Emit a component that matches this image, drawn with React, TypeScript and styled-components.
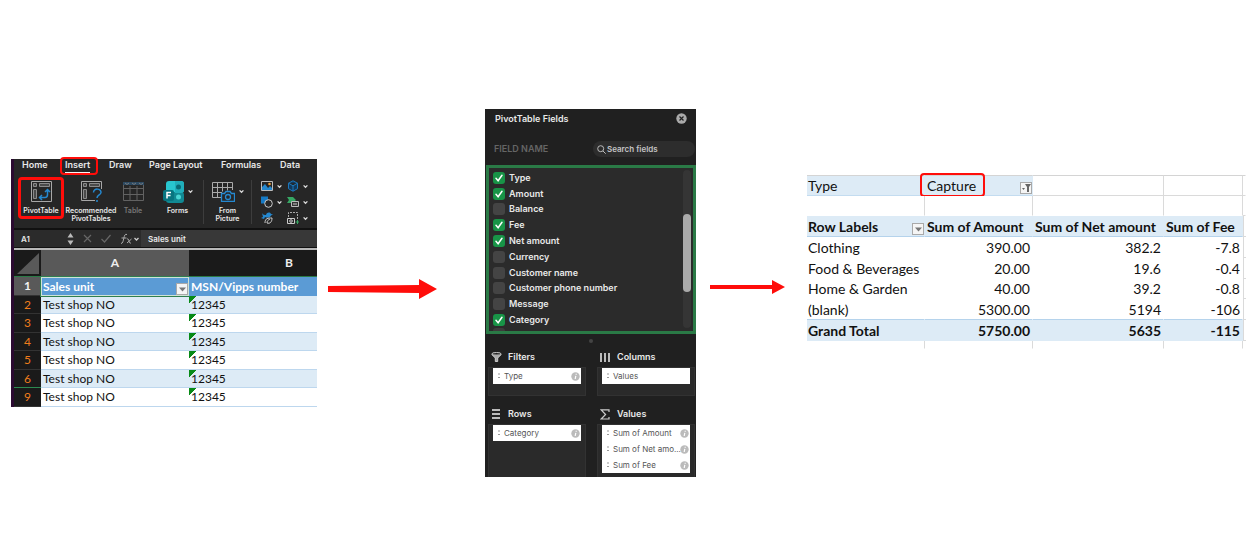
import React from "react";
import styled, { createGlobalStyle } from "styled-components";

const UI = `Inter, "Liberation Sans", sans-serif`;
const SHEET = `Lato, "Liberation Sans", sans-serif`;
const RED = "#ff0d0a";
const GREEN = "#2a7a46";
const BAND = "#ddebf6";

const Global = createGlobalStyle`
  * { box-sizing: border-box; }
  body { margin: 0; background: #fff; }
  button, input { font: inherit; color: inherit; margin: 0; padding: 0; border: 0; background: none; }
  svg { display: block; flex: none; }
`;

const Page = styled.main`
  display: grid;
  grid-template-columns: minmax(0, 306fr) minmax(0, 168fr) minmax(0, 211fr) minmax(0, 111fr) minmax(0, 439fr);
  align-items: start;
  padding: 109px 5px 75px 11px;
`;

/* ---------- flow arrows ---------- */

const ArrowCell = styled.div<{ $top: number; $left: number; $right: number }>`
  padding: ${(p) => p.$top}px ${(p) => p.$right}px 0 ${(p) => p.$left}px;
  svg { width: 100%; }
`;

/* ---------- spreadsheet window ---------- */

const Workbook = styled.section`
  margin-top: 50px;
  border-left: 3px solid #2b0b31;
  background: #262626;
  color: #e8e8e8;
  font-family: ${UI};
`;

const TabBar = styled.nav`
  display: flex;
  height: 16px;
  padding-left: 8px;
  font-size: 9px;
  font-weight: 600;
  line-height: 11px;
`;

const Tab = styled.button<{ $width: number; $active?: boolean }>`
  position: relative;
  flex: none;
  width: ${(p) => p.$width}px;
  height: 14px;
  padding-bottom: 3px;
  text-align: left;
  white-space: nowrap;
  span { border-bottom: ${(p) => (p.$active ? "2px solid #f4f4f4" : "0")}; padding-bottom: 2px; }
`;

const Highlight = styled.i<{ $inset: string; $weight?: number }>`
  position: absolute;
  inset: ${(p) => p.$inset};
  border: ${(p) => p.$weight ?? 2}px solid ${RED};
  border-radius: 4px;
  pointer-events: none;
`;

const Ribbon = styled.div`
  display: flex;
  height: 53px;
  padding-top: 5px;
  font-size: 7px;
  font-weight: 600;
  line-height: 8px;
`;

const Tool = styled.button<{ $width: number; $dim?: boolean }>`
  position: relative;
  flex: none;
  display: flex;
  flex-direction: column;
  align-items: center;
  width: ${(p) => p.$width}px;
  gap: 4px;
  text-align: center;
  white-space: nowrap;
  color: ${(p) => (p.$dim ? "#777" : "#e8e8e8")};
`;

const IconRow = styled.span`
  display: flex;
  align-items: center;
  gap: 4px;
  height: 23px;
`;

const Divider = styled.i`
  flex: none;
  width: 1px;
  height: 44px;
  background: #3d3d3d;
`;

const MiniGrid = styled.div`
  display: grid;
  grid-template-columns: 26px 26px;
  grid-auto-rows: 16px;
  margin-top: -2px;
  padding-left: 9px;
`;

const Mini = styled.button`
  display: flex;
  align-items: center;
  gap: 4px;
`;

const FormulaBar = styled.div`
  display: flex;
  align-items: center;
  height: 20px;
  border-top: 2px solid #111;
  background: #2b2b2b;
  border-bottom: 1px solid #111;
  font-size: 8px;
  font-weight: 600;
`;

const NameBox = styled.input`
  width: 50px;
  padding-left: 7px;
`;

const FormulaTools = styled.div`
  display: flex;
  align-items: center;
  gap: 9px;
  width: 77px;
  padding-left: 3px;
`;

const FormulaInput = styled.input`
  flex: 1;
  min-width: 0;
  height: 17px;
  padding-left: 7px;
  background: #383838;
`;

const Grid = styled.table`
  width: 100%;
  table-layout: fixed;
  border-collapse: separate;
  border-spacing: 0;
  border-top: 2px solid #b8b8b8;
  font-family: ${SHEET};
  font-size: 12px;
  line-height: 16px;
  color: #111;
  th, td { padding: 0 2px; text-align: left; white-space: nowrap; }
  thead th { height: 27px; background: #1a1a1a; color: #eee; text-align: center; border-bottom: 1px solid ${GREEN}; }
  thead th:first-child { background: #1a1a1a; padding: 0; }
  thead th:nth-child(2) { background: #595959; }
  thead th:nth-child(3) { padding-left: 74px; }
  tbody tr { height: 18px; }
  tbody tr:nth-child(odd) { height: 19px; }
`;

const RowHead = styled.th<{ $selected?: boolean; $gap?: boolean }>`
  && {
    text-align: center;
    font-weight: ${(p) => (p.$selected ? 700 : 400)};
    color: ${(p) => (p.$selected ? "#f2f2f2" : "#f07d1c")};
    background: ${(p) => (p.$selected ? "#595959" : "#1a1a1a")};
    border-bottom: 1px solid ${(p) => (p.$gap ? "#2c8a50" : "#333")};
  }
`;

const TitleCell = styled.td<{ $selected?: boolean }>`
  position: relative;
  background: #5b9bd5;
  color: #fff;
  font-weight: 700;
  box-shadow: ${(p) => (p.$selected ? "inset 0 0 0 1px #cfe3d6, 0 0 0 1px #2f7f50" : "none")};
`;

const Cell = styled.td<{ $band: boolean; $flag?: boolean }>`
  border-bottom: 1px solid #bdd7ee;
  background: ${(p) =>
    `${p.$flag ? "linear-gradient(135deg, #078a17 0 5px, transparent 5px) no-repeat, " : ""}${p.$band ? BAND : "#fff"}`};
`;

const Drop = styled.button<{ $right: number }>`
  position: absolute;
  right: ${(p) => p.$right}px;
  bottom: 1px;
  display: grid;
  place-items: center;
  width: 12px;
  height: 12px;
  && { border: 1px solid #a9a9a9; }
  background: #f5f5f5;
`;

/* ---------- pivot fields pane ---------- */

const Pane = styled.aside`
  background: #202020;
  color: #e8e8e8;
  font-family: ${UI};
  font-size: 9px;
  font-weight: 600;
  line-height: 12px;
`;

const PaneTitle = styled.header`
  display: flex;
  align-items: center;
  justify-content: space-between;
  height: 32px;
  padding: 0 9px 13px 10px;
`;

const SearchRow = styled.div`
  display: flex;
  align-items: center;
  justify-content: space-between;
  height: 16px;
  padding: 0 1px 0 9px;
  color: #656565;
`;

const SearchBox = styled.label`
  display: flex;
  align-items: center;
  gap: 1px;
  width: 102px;
  height: 16px;
  padding-left: 4px;
  border-radius: 8px;
  background: #2d2d2d;
  color: #bbb;
  font-size: 8px;
  input { width: 80px; outline: 0; }
  input::placeholder { color: #c4c4c4; opacity: 1; }
`;

const FieldArea = styled.div`
  display: flex;
  justify-content: space-between;
  height: 169px;
  margin: 8px 0 0 1px;
  padding: 2px 2px 0 4px;
  border: 3px solid ${GREEN};
  background: #2b2b2b;
  overflow: hidden;
`;

const FieldList = styled.div`
  display: flex;
  flex-direction: column;
  height: 161px;
`;

const Field = styled.label`
  flex: 1 0 0;
  display: flex;
  align-items: center;
  gap: 4px;
`;

const Check = styled.input`
  && {
    appearance: none;
    width: 12px;
    height: 12px;
    border-radius: 3px;
    background: #444;
  }
  &&:checked {
    background: #189447
      url("data:image/svg+xml,%3Csvg xmlns='http://www.w3.org/2000/svg' viewBox='0 0 12 12'%3E%3Cpath d='M3 6.3 5.1 8.7 9 3.3' fill='none' stroke='white' stroke-width='1.5' stroke-linecap='round'/%3E%3C/svg%3E");
  }
`;

const NextField = styled.i`
  flex: none;
  width: 12px;
  height: 3px;
  border-radius: 3px 3px 0 0;
  background: #3c3c3c;
`;

const Track = styled.div`
  width: 8px;
  height: 158px;
  padding-top: 44px;
  border-radius: 4px;
  background: #353535;
`;

const Thumb = styled.div`
  height: 78px;
  border-radius: 4px;
  background: #aaa;
`;

const Grip = styled.i`
  display: block;
  width: 4px;
  height: 4px;
  margin: 5px auto 6px;
  border-radius: 50%;
  background: #444;
`;

const Zones = styled.div`
  display: grid;
  grid-template-columns: minmax(0, 1fr) minmax(0, 1fr);
  column-gap: 11px;
  padding: 0 1px 0 3px;
`;

const ZoneTitle = styled.h3`
  display: flex;
  align-items: center;
  gap: 6px;
  height: 18px;
  margin: 0;
  padding: 0 0 2px 3px;
  font-size: 9px;
  font-weight: 600;
`;

const ZoneBody = styled.div<{ $height: number; $after: number }>`
  height: ${(p) => p.$height}px;
  margin-bottom: ${(p) => p.$after}px;
  padding: 0 4px;
  border: 1px solid #323232;
  border-bottom-width: ${(p) => (p.$after ? 1 : 0)}px;
  background: #2a2a2a;
`;

const Chip = styled.button`
  && { background: #fff; }
  display: flex;
  align-items: center;
  gap: 3px;
  width: 100%;
  height: 16px;
  padding: 0 1px 0 5px;
  color: #555;
  font-size: 8px;
  font-weight: 400;
  text-align: left;
  white-space: nowrap;
  span { flex: 1; min-width: 0; }
`;

/* ---------- pivot result ---------- */

const Result = styled.section`
  margin-top: 66px;
  font-family: ${SHEET};
`;

const Pivot = styled.table`
  width: 100%;
  table-layout: fixed;
  border-collapse: separate;
  border-spacing: 0;
  font-size: 14px;
  line-height: 18px;
  color: #111;
  tr { height: 21px; }
  tr:nth-child(4n + 2) { height: 20px; }
  tr:last-child { height: 8px; }
`;

const PCell = styled.td<{ $fill?: boolean; $bold?: boolean; $num?: boolean; $line?: string; $grid?: boolean; $cap?: boolean }>`
  position: relative;
  padding: ${(p) => (p.$cap ? 0 : 1)}px 2px 0 1px;
  &:not(:first-child) { padding-left: ${(p) => (p.$num ? 0 : 2)}px; }
  white-space: nowrap;
  text-align: ${(p) => (p.$num ? "right" : "left")};
  font-weight: ${(p) => (p.$bold ? 700 : 400)};
  background: ${(p) => (p.$fill ? BAND : "#fff")};
  border-bottom: 1px solid ${(p) => p.$line ?? "transparent"};
  border-right: 1px solid ${(p) => (p.$grid ? "#dadada" : p.$fill ? BAND : "transparent")};
  border-top: ${(p) => (p.$cap ? "1px solid #d4d4d4" : "0")};
`;

const Stub = styled.td<{ $line?: boolean }>`
  padding: 0;
  border-left: 1px solid #dadada;
  border-bottom: 1px solid ${(p) => (p.$line ? "#dadada" : "transparent")};
`;

/* ---------- drawings ---------- */

const Chevron = () => (
  <svg width="5" height="5" viewBox="0 0 5 5" fill="none" stroke="#ddd" strokeWidth="1.3"><path d="M.6 1.4 2.5 3.3 4.4 1.4" /></svg>
);

const PivotIcon = ({ question }: { question?: boolean }) => (
  <svg width="23" height="23" viewBox="0 0 23 23" fill="none" stroke="#a7a7a7">
    <path d={question ? "M15 20.5H1.5v-19h20V9" : "M1.5 1.5h20v20h-20z"} />
    <path d="M3.5 3.5h3v3h-3zM9.5 3.5h10v3h-10zM3.5 9.5h3v9h-3z" fill="#4b4b4b" stroke="#8a8a8a" />
    {question ? (
      <path d="M13.500 12.500c0-5 8-4 7.500 0-.3 2.500-4 2.500-4 5.500M17 20v2" stroke="#2588cf" strokeWidth="1.500" />
    ) : (
      <path d="M9.500 17.500H15c2 0 2.500-1 2.500-3V9.500M12 15l-2.500 2.500L12 20M15 12l2.500-2.500L20 12" stroke="#2588cf" strokeWidth="1.500" />
    )}
  </svg>
);

const TableIcon = () => (
  <svg width="21" height="23" viewBox="0 0 21 23" fill="none" stroke="#626262">
    <path d="M.5 2.500h20v18H.5zM.5 8.500h20M.5 14.500h20M7 6v14.500M14 6v14.500" />
    <path d="M0 3.500h21" stroke="#2d4a62" strokeWidth="3" /><path d="m2 3 2 1.500L6 3m3 0 2 1.500L13 3m3 0 2 1.500L20 3" stroke="#888" strokeWidth=".8" />
  </svg>
);

const FormsIcon = () => (
  <svg width="21" height="22" viewBox="0 0 21 22">
    <rect x="3" width="18" height="12" rx="3" fill="#28c6cf" /><rect x="3" y="11" width="18" height="11" rx="3" fill="#118993" />
    <path d="M12 0h6a3 3 0 0 1 3 3v6a3 3 0 0 1-3 3h-6z" fill="#20aeba" />
    <circle cx="15.500" cy="6" r="2.500" fill="#086b76" /><circle cx="15.500" cy="16" r="2.500" fill="#4ad5d4" />
    <rect y="9" width="11" height="11" rx="2" fill="#087580" />
    <path d="M4 17.500v-6h4M4 14.500h3.500" fill="none" stroke="#fff" strokeWidth="1.500" />
  </svg>
);

const PictureTableIcon = () => (
  <svg width="23" height="21" viewBox="0 0 23 21" fill="none" stroke="#aaa">
    <path d="M10 16.500H.5v-15h20V9M.5 6.500h20M.5 11.500H10M5.500 1.500v15M10.500 1.500v9M15.500 1.500v8" />
    <path d="M9.500 12.500h3l1.500-2h4l1.500 2h3v8h-13z" fill="#262626" stroke="#2588cf" strokeWidth="1.300" /><circle cx="16" cy="16" r="2.500" stroke="#2588cf" strokeWidth="1.300" />
  </svg>
);

const minis = [
  <svg key="a" width="12" height="12" viewBox="0 0 12 12"><path d="M.5 1.500h11v9H.5z" fill="#252525" stroke="#bbb" /><path d="M1 10V7l3-3 3 4 2-2 2 2v2z" fill="#2588cf" /><circle cx="8.500" cy="4" r="1.300" fill="#f0a33b" /></svg>,
  <svg key="b" width="12" height="12" viewBox="0 0 12 12" fill="none" stroke="#1d78bd"><path d="m6 .8 4.500 2.400v5.500L6 11.200 1.500 8.700V3.200zM1.500 3.200 6 5.800l4.500-2.600M6 5.800v5.400" fill="#12395b" /></svg>,
  <svg key="c" width="12" height="12" viewBox="0 0 12 12"><path d="M0 .5h7v7H0z" fill="#167ac5" /><circle cx="7.500" cy="7.500" r="3.800" fill="#262626" stroke="#ccc" /></svg>,
  <svg key="d" width="12" height="12" viewBox="0 0 12 12"><path d="M0 1h6l3 3-3 3H0l2-3z" fill="#36a763" /><path d="M4.500 5.500h7v5h-7z" fill="#333" stroke="#bbb" /><path d="M6 8h4" stroke="#ccc" /></svg>,
  <svg key="e" width="12" height="12" viewBox="0 0 12 12"><path d="M1 1c1 2 3 2 4 2 1-3 4-3 5-1l2 .5-2 1C9 6 6 6 4 5L3 7 0 6l2-1z" fill="#2588cf" /><path d="M4 11c0-5 3-5 7-5 0 4-2 6-5 5 0-2 1-3 3-4" fill="none" stroke="#ccc" /></svg>,
  <svg key="f" width="12" height="12" viewBox="0 0 12 12" fill="none"><path d="M1.500 5V.5h9V8" stroke="#aaa" strokeDasharray="2 1" /><path d="M.5 6.500h7v5h-7z" stroke="#ccc" /><circle cx="4" cy="9" r="1.300" stroke="#ccc" /><path d="M10.500 8v4M8.500 10h4" stroke="#36a763" /></svg>,
];

const Dots = () => (
  <svg width="3" height="6" viewBox="0 0 3 6" fill="#999"><path d="M0 .5h2v1H0zM0 4h2v1H0z" /></svg>
);

const Info = () => (
  <svg width="9" height="9" viewBox="0 0 9 9"><circle cx="4.500" cy="4.500" r="4.200" fill="#bbb" /><path d="M5.200 1.800v1M4.800 3.800 4.200 7" stroke="#fff" strokeWidth="1.200" /></svg>
);

const Caret = () => (
  <svg width="7" height="5" viewBox="0 0 7 5" fill="#777"><path d="M0 .5h7L3.500 4.500z" /></svg>
);

const zoneIcons: Record<string, React.ReactNode> = {
  Filters: <svg width="11" height="10" viewBox="0 0 11 10" fill="none" stroke="#ccc"><ellipse cx="5.500" cy="2" rx="4.700" ry="1.500" /><path d="M.8 2.500 4.300 6v3.500h2.400V6l3.500-3.500" fill="#aaa" /></svg>,
  Columns: <svg width="11" height="9" viewBox="0 0 11 9" fill="#bbb"><path d="M0 0h2v9H0zM4 0h2v9H4zM8 0h2v9H8z" /></svg>,
  Rows: <svg width="11" height="10" viewBox="0 0 11 10" fill="#bbb"><path d="M1 0h8v2H1zM1 4h8v2H1zM1 8h8v2H1z" /></svg>,
  Values: <svg width="11" height="11" viewBox="0 0 11 11" fill="none" stroke="#ccc" strokeWidth="1.200"><path d="M9 3V.8H1.200L5.600 5.500 1.200 10H9V8" /></svg>,
};

/* ---------- data ---------- */

const tabs: [string, number][] = [["Home", 43], ["Insert", 44], ["Draw", 40], ["Page Layout", 72], ["Formulas", 59], ["Data", 30]];
const units = [2, 3, 4, 5, 6, 9];
const fields: [string, boolean][] = [
  ["Type", true], ["Amount", true], ["Balance", false], ["Fee", true], ["Net amount", true],
  ["Currency", false], ["Customer name", false], ["Customer phone number", false], ["Message", false], ["Category", true],
];
const totals = [
  ["Clothing", "390.00", "382.2", "-7.8"],
  ["Food & Beverages", "20.00", "19.6", "-0.4"],
  ["Home & Garden", "40.00", "39.2", "-0.8"],
  ["(blank)", "5300.00", "5194", "-106"],
];

type ZoneProps = { name: string; items: string[]; height: number; after?: number; info?: boolean };
const Zone = ({ name, items, height, after = 0, info = true }: ZoneProps) => (
  <section>
    <ZoneTitle>{zoneIcons[name]}{name}</ZoneTitle>
    <ZoneBody $height={height} $after={after}>
      {items.map((item) => (
        <Chip key={item}><Dots /><span>{item}</span>{info && <Info />}</Chip>
      ))}
    </ZoneBody>
  </section>
);

export default function App() {
  return (
    <Page>
      <Global />
      <Workbook>
        <TabBar>
          {tabs.map(([name, width]) => (
            <Tab key={name} $width={width} $active={name === "Insert"}>
              <span>{name}</span>
              {name === "Insert" && <Highlight $inset="-2px 11px -2px -5px" />}
            </Tab>
          ))}
        </TabBar>
        <Ribbon>
          <Tool $width={54}>
            <IconRow><PivotIcon /></IconRow>PivotTable
            <Highlight $inset="-3px 4px 9px 4px" $weight={3} />
          </Tool>
          <Tool $width={46}><IconRow><PivotIcon question /></IconRow><span>Recommended<br />PivotTables</span></Tool>
          <Tool $width={38} $dim><IconRow><TableIcon /></IconRow>Table</Tool>
          <Tool $width={51}><IconRow><FormsIcon /><Chevron /></IconRow>Forms</Tool>
          <Divider />
          <Tool $width={47}><IconRow><PictureTableIcon /><Chevron /></IconRow><span>From<br />Picture</span></Tool>
          <Divider />
          <MiniGrid>
            {minis.map((icon, i) => <Mini key={i} aria-label="Insert object">{icon}{i !== 4 && <Chevron />}</Mini>)}
          </MiniGrid>
        </Ribbon>
        <FormulaBar>
          <NameBox aria-label="Name box" defaultValue="A1" />
          <FormulaTools>
            <svg width="7" height="12" viewBox="0 0 7 12" fill="#bbb"><path d="M.5 4.500 3.500 0l3 4.500zM.5 7.500h6l-3 4.500z" /></svg>
            <svg width="9" height="9" viewBox="0 0 9 9" stroke="#666" strokeWidth="1.200"><path d="m1 1 7 7M8 1 1 8" /></svg>
            <svg width="10" height="9" viewBox="0 0 10 9" fill="none" stroke="#666" strokeWidth="1.200"><path d="m.5 5 3 3L9.500 1" /></svg>
            <svg width="20" height="12" viewBox="0 0 20 12" fill="none" stroke="#aaa"><path d="M7 1.500c-4-2-2.500 9-6 9M1.500 5h5M7 6c3-1 1 5 4 4M11.500 6 7 10" /><path d="m14.500 5 2 2 2-2" stroke="#ccc" strokeWidth="1.300" /></svg>
          </FormulaTools>
          <FormulaInput aria-label="Formula" defaultValue="Sales unit" />
        </FormulaBar>
        <Grid>
          <colgroup><col width="27" /><col width="148" /><col /></colgroup>
          <thead>
            <tr>
              <th><svg width="27" height="26" viewBox="0 0 27 26"><path d="M25 3v21H3z" fill="#595959" /></svg></th>
              <th>A</th>
              <th>B</th>
            </tr>
          </thead>
          <tbody>
            <tr>
              <RowHead $selected>1</RowHead>
              <TitleCell $selected>Sales unit<Drop $right={1} aria-label="Filter sales unit"><Caret /></Drop></TitleCell>
              <TitleCell>MSN/Vipps number</TitleCell>
            </tr>
            {units.map((n, i) => (
              <tr key={n}>
                <RowHead $gap={n === 6}>{n}</RowHead>
                <Cell $band={i % 2 === 0}>Test shop NO</Cell>
                <Cell $band={i % 2 === 0} $flag>12345</Cell>
              </tr>
            ))}
          </tbody>
        </Grid>
      </Workbook>

      <ArrowCell $top={169} $left={10} $right={48}>
        <svg height="22" viewBox="0 0 110 22" preserveAspectRatio="none"><path d="M1 8 92 7V1l18 10-18 10v-6L1 14z" fill={RED} /></svg>
      </ArrowCell>

      <Pane>
        <PaneTitle>
          PivotTable Fields
          <button aria-label="Close"><svg width="11" height="11" viewBox="0 0 11 11"><circle cx="5.500" cy="5.500" r="5.200" fill="#aaa" /><path d="m3.500 3.500 4 4M7.500 3.500l-4 4" stroke="#222" strokeWidth="1.200" /></svg></button>
        </PaneTitle>
        <SearchRow>
          FIELD NAME
          <SearchBox>
            <svg width="9" height="9" viewBox="0 0 9 9" fill="none" stroke="#bbb"><circle cx="3.700" cy="3.700" r="3" /><path d="m6 6 2.700 2.700" /></svg>
            <input aria-label="Search fields" placeholder="Search fields" />
          </SearchBox>
        </SearchRow>
        <FieldArea>
          <FieldList>
            {fields.map(([name, on]) => (
              <Field key={name}><Check type="checkbox" defaultChecked={on} />{name}</Field>
            ))}
            <NextField />
          </FieldList>
          <Track><Thumb /></Track>
        </FieldArea>
        <Grip />
        <Zones>
          <Zone name="Filters" items={["Type"]} height={29} after={10} />
          <Zone name="Columns" items={["Values"]} height={29} after={10} info={false} />
          <Zone name="Rows" items={["Category"]} height={53} />
          <Zone name="Values" items={["Sum of Amount", "Sum of Net amo...", "Sum of Fee"]} height={53} />
        </Zones>
      </Pane>

      <ArrowCell $top={170} $left={14} $right={22}>
        <svg height="16" viewBox="0 0 75 16" preserveAspectRatio="none"><path d="M0 6h62V1l13 7-13 7v-5H0z" fill={RED} /></svg>
      </ArrowCell>

      <Result>
        <Pivot>
          <colgroup><col width="118" /><col width="108" /><col width="131" /><col width="79" /><col /></colgroup>
          <tbody>
            <tr>
              <PCell $fill $cap $line="#c3dcf0">Type</PCell>
              <PCell $fill $cap $line="#c3dcf0">
                Capture
                <Highlight $inset="-3px 47px -2px -5px" />
                <Drop $right={0} aria-label="Filter type">
                  <svg width="9" height="8" viewBox="0 0 9 8" fill="#666"><path d="M3 0h6L7 3v5H5V3zM0 4h3L1.500 6z" /></svg>
                </Drop>
              </PCell>
              <PCell $grid $cap $line="#dadada" />
              <PCell $grid $cap $line="#dadada" />
              <PCell $cap $line="#dadada" />
            </tr>
            <tr>
              <PCell $grid /><PCell $grid /><PCell $grid /><PCell $grid /><PCell $line="#dadada" />
            </tr>
            <tr>
              <PCell as="th" $fill $bold $line="#b5d3ec">Row Labels<Drop $right={0} aria-label="Filter row labels"><Caret /></Drop></PCell>
              <PCell as="th" $fill $bold $line="#b5d3ec">Sum of Amount</PCell>
              <PCell as="th" $fill $bold $line="#b5d3ec">Sum of Net amount</PCell>
              <PCell as="th" $fill $bold $line="#b5d3ec">Sum of Fee</PCell>
              <Stub $line />
            </tr>
            {totals.map((row, i) => (
              <tr key={row[0]}>
                {row.map((v, c) => <PCell key={c} $num={c > 0} $line={i === 3 ? "#b5d3ec" : undefined}>{v}</PCell>)}
                <Stub $line />
              </tr>
            ))}
            <tr>
              <PCell $fill $bold>Grand Total</PCell>
              <PCell $fill $bold $num>5750.00</PCell>
              <PCell $fill $bold $num>5635</PCell>
              <PCell $fill $bold $num>-115</PCell>
              <Stub $line />
            </tr>
            <tr><PCell $grid /><PCell $grid /><PCell $grid /><PCell $grid /><PCell /></tr>
          </tbody>
        </Pivot>
      </Result>
    </Page>
  );
}
